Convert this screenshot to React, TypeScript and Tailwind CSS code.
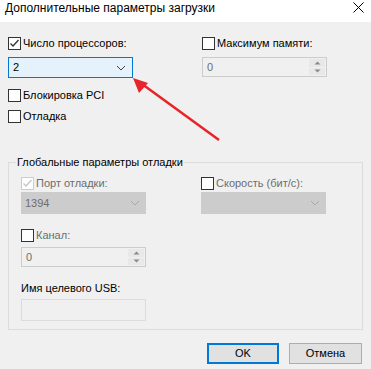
import React from "react";

const Check = ({ checked, disabled }: { checked?: boolean; disabled?: boolean }) => (
  <div
    className={
      "w-[13px] h-[13px] shrink-0 border flex items-center justify-center " +
      (disabled ? "border-[#cccccc] bg-white" : "border-[#333333] bg-white")
    }
  >
    {checked && (
      <svg width="11" height="11" viewBox="0 0 11 11">
        <path
          d="M1.5 5.5 L4 8 L9.5 2"
          fill="none"
          stroke={disabled ? "#c4c4c4" : "#333333"}
          strokeWidth="1.3"
        />
      </svg>
    )}
  </div>
);

const Chevron = ({ color }: { color: string }) => (
  <svg width="10" height="6" viewBox="0 0 10 6">
    <path d="M1 1 L5 5 L9 1" fill="none" stroke={color} strokeWidth="1" />
  </svg>
);

const Spin = ({ value }: { value: string }) => (
  <div className="w-[125px] h-[20px] border border-[#cccccc] flex items-stretch">
    <div className="flex-1 pl-[4px] flex items-center text-[#6d6d6d]">{value}</div>
    <div className="w-[17px] flex flex-col gap-[1px] py-[1px] pr-[1px]">
      <div className="flex-1 bg-[#e8e8e8] flex items-center justify-center">
        <svg width="7" height="4" viewBox="0 0 7 4">
          <path d="M0.5 3.5 L3.5 0.5 L6.5 3.5 Z" fill="#8a8a8a" />
        </svg>
      </div>
      <div className="flex-1 bg-[#e8e8e8] flex items-center justify-center">
        <svg width="7" height="4" viewBox="0 0 7 4">
          <path d="M0.5 0.5 L3.5 3.5 L6.5 0.5 Z" fill="#8a8a8a" />
        </svg>
      </div>
    </div>
  </div>
);

export default function App() {
  return (
    <div
      className="relative w-[371px] h-[369px] bg-[#f0f0f0] text-[11px] text-black overflow-hidden"
      style={{ fontFamily: '"Liberation Sans", Arial, sans-serif' }}
    >
      {/* Title bar */}
      <div className="h-[22px] bg-white flex items-center justify-between pl-[5px] pr-[7px]">
        <span className="text-[12px] leading-none -mt-[6px]">Дополнительные параметры загрузки</span>
        <svg width="11" height="11" viewBox="0 0 11 11" className="-mt-[8px]">
          <path d="M0.5 0.5 L10.5 10.5 M10.5 0.5 L0.5 10.5" stroke="#000" strokeWidth="1" />
        </svg>
      </div>

      <div className="pl-[8px] pt-[15px]">
        <div className="flex">
          <div className="w-[194px]">
            <div className="flex items-center gap-[2px] h-[13px]">
              <Check checked />
              <span className="leading-none">Число процессоров:</span>
            </div>
            <div className="mt-[7px] w-[125px] h-[21px] border border-[#0078d7] bg-[#e5f1fb] flex items-center justify-between pl-[4px] pr-[6px]">
              <span>2</span>
              <Chevron color="#444" />
            </div>
          </div>
          <div>
            <div className="flex items-center gap-[2px] h-[13px]">
              <Check />
              <span className="leading-none">Максимум памяти:</span>
            </div>
            <div className="mt-[7px]">
              <Spin value="0" />
            </div>
          </div>
        </div>

        <div className="mt-[11px] flex items-center gap-[2px] h-[13px]">
          <Check />
          <span className="leading-none">Блокировка PCI</span>
        </div>
        <div className="mt-[8px] flex items-center gap-[2px] h-[13px]">
          <Check />
          <span className="leading-none">Отладка</span>
        </div>

        {/* Group box */}
        <div className="relative mt-[39px] w-[355px] h-[168px] border border-[#dcdcdc] pl-[12px] pt-[14px]">
          <div className="absolute -top-[8px] left-[7px] bg-[#f0f0f0] px-[1px] leading-[14px]">
            Глобальные параметры отладки
          </div>
          <div className="flex">
            <div className="w-[180px]">
              <div className="flex items-center gap-[2px] h-[13px]">
                <Check checked disabled />
                <span className="leading-none text-[#6d6d6d]">Порт отладки:</span>
              </div>
              <div className="mt-[2px] w-[125px] h-[22px] bg-[#cccccc] flex items-center justify-between pl-[4px] pr-[6px]">
                <span className="text-[#6d6d6d]">1394</span>
                <Chevron color="#a8a8a8" />
              </div>
            </div>
            <div>
              <div className="flex items-center gap-[2px] h-[13px]">
                <Check />
                <span className="leading-none text-[#6d6d6d]">Скорость (бит/с):</span>
              </div>
              <div className="mt-[2px] w-[125px] h-[22px] bg-[#cccccc] flex items-center justify-end pr-[6px]">
                <Chevron color="#a8a8a8" />
              </div>
            </div>
          </div>
          <div className="mt-[15px] flex items-center gap-[2px] h-[13px]">
            <Check />
            <span className="leading-none text-[#6d6d6d]">Канал:</span>
          </div>
          <div className="mt-[5px]">
            <Spin value="0" />
          </div>
          <div className="mt-[14px] leading-[14px]">Имя целевого USB:</div>
          <div className="mt-[4px] w-[125px] h-[22px] border border-[#dcdcdc]" />
        </div>

        {/* Buttons */}
        <div className="mt-[13px] flex gap-[10px] pl-[199px]">
          <button className="w-[72px] h-[21px] border-2 border-[#0078d7] bg-[#e1e1e1] flex items-center justify-center">
            OK
          </button>
          <button className="w-[73px] h-[21px] border border-[#adadad] bg-[#e1e1e1] flex items-center justify-center">
            Отмена
          </button>
        </div>
      </div>

      {/* Red arrow overlay */}
      <svg className="absolute left-0 top-0 pointer-events-none" width="371" height="369" viewBox="0 0 371 369">
        <line x1="219" y1="140" x2="142" y2="84" stroke="#e8232b" strokeWidth="2.5" />
        <path d="M133 78 L148 83 L139 93 Z" fill="#e8232b" />
      </svg>
    </div>
  );
}
